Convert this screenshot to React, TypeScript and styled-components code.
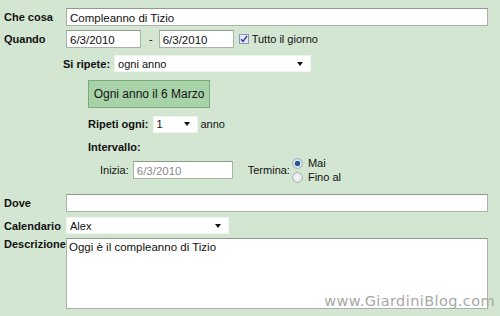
import React from 'react';
import styled, { createGlobalStyle } from 'styled-components';

const GlobalStyle = createGlobalStyle`
  html, body {
    margin: 0;
    padding: 0;
    background: #d3e6d2;
  }
  * {
    box-sizing: border-box;
  }
`;

const Page = styled.div`
  position: relative;
  width: 500px;
  height: 316px;
  overflow: hidden;
  padding: 8px 12px 0 4px;
  background: #d3e6d2;
  font-family: 'Liberation Sans', Arial, sans-serif;
  font-size: 11px;
  color: #111;
`;

const Row = styled.div<{ $top?: number; $indent?: number; $height?: number }>`
  display: flex;
  align-items: center;
  margin-top: ${({ $top }) => $top ?? 0}px;
  padding-left: ${({ $indent }) => $indent ?? 0}px;
  height: ${({ $height }) => $height ?? 18}px;
`;

const TopRow = styled(Row)`
  align-items: flex-start;
`;

const Label = styled.div`
  width: 62px;
  flex-shrink: 0;
  font-weight: bold;
  white-space: nowrap;
`;

const InlineLabel = styled.span<{ $bold?: boolean }>`
  font-weight: ${({ $bold }) => ($bold ? 'bold' : 'normal')};
  margin-right: 4px;
  white-space: nowrap;
`;

const TextInput = styled.input<{ $width?: number; $muted?: boolean }>`
  width: ${({ $width }) => ($width ? `${$width}px` : '100%')};
  flex: ${({ $width }) => ($width ? 'none' : '1')};
  height: 18px;
  margin: 0;
  padding: 1px 3px 0;
  border: 1px solid #a9b4a9;
  border-top-color: #8f998f;
  background: #fff;
  font-family: 'Liberation Sans', Arial, sans-serif;
  font-size: 11.5px;
  color: ${({ $muted }) => ($muted ? '#8a8a8a' : '#111')};
  outline: none;
`;

const TextArea = styled.textarea`
  flex: 1;
  height: 71px;
  margin: 0;
  padding: 2px 2px;
  border: 1px solid #a9b4a9;
  border-top-color: #8f998f;
  background: #fff;
  font-family: 'Liberation Sans', Arial, sans-serif;
  font-size: 11.5px;
  color: #111;
  resize: none;
  outline: none;
`;

const Dash = styled.span`
  margin: 0 6px 0 8px;
`;

const SelectBox = styled.div<{ $width: number }>`
  display: flex;
  align-items: center;
  justify-content: space-between;
  width: ${({ $width }) => $width}px;
  height: 17px;
  padding: 0 7px 0 3px;
  background: #fff;
  border: 1px solid #eef5ee;
`;

const Caret = styled.span`
  width: 0;
  height: 0;
  border-left: 3.5px solid transparent;
  border-right: 3.5px solid transparent;
  border-top: 4px solid #111;
`;

const CheckBox = styled.span`
  display: inline-flex;
  align-items: center;
  justify-content: center;
  width: 10px;
  height: 10px;
  margin: 0 3px 0 5px;
  border: 1px solid #8a94b8;
  background: #e6e9f4;
`;

const YearButton = styled.div`
  display: flex;
  align-items: center;
  justify-content: center;
  width: 122px;
  height: 28px;
  margin: 8px 0 0 84px;
  background: #a8d2a7;
  border: 1px solid #7aa97a;
  font-size: 12px;
  color: #151515;
`;

const SectionTitle = styled.div`
  margin: 9px 0 0 84px;
  height: 12px;
  line-height: 12px;
  font-weight: bold;
`;

const RangeRow = styled.div`
  display: flex;
  align-items: center;
  margin: 4px 0 0 96px;
  height: 26px;
`;

const EndGroup = styled.div`
  display: flex;
  align-items: center;
  margin-left: 15px;
`;

const RadioList = styled.div`
  display: flex;
  flex-direction: column;
  gap: 3px;
  margin-left: 2px;
`;

const RadioItem = styled.div`
  display: flex;
  align-items: center;
  gap: 5px;
  height: 11px;
`;

const Radio = styled.span<{ $checked?: boolean }>`
  display: inline-block;
  width: 11px;
  height: 11px;
  border-radius: 50%;
  border: 1px solid #a7b0b6;
  background: ${({ $checked }) =>
    $checked
      ? 'radial-gradient(circle, #2a5688 0 2.5px, #d3e2ef 3px)'
      : 'radial-gradient(circle, #f6f7f7 0, #dcdfe1 100%)'};
`;

const Watermark = styled.div`
  position: absolute;
  right: 5px;
  bottom: 7px;
  font-family: 'DejaVu Sans', sans-serif;
  font-size: 14.5px;
  letter-spacing: 0.4px;
  color: #a6a9a6;
`;

const CheckMark = () => (
  <svg width="8" height="8" viewBox="0 0 8 8">
    <path d="M1 4.2 L3 6.3 L7 1" fill="none" stroke="#2c3ea8" strokeWidth="1.4" />
  </svg>
);

const App: React.FC = () => {
  return (
    <>
      <GlobalStyle />
      <Page>
        <Row>
          <Label>Che cosa</Label>
          <TextInput readOnly value="Compleanno di Tizio" />
        </Row>

        <Row $top={4}>
          <Label>Quando</Label>
          <TextInput readOnly $width={75} value="6/3/2010" />
          <Dash>-</Dash>
          <TextInput readOnly $width={75} value="6/3/2010" />
          <CheckBox>
            <CheckMark />
          </CheckBox>
          <span>Tutto il giorno</span>
        </Row>

        <Row $top={7} $indent={59} $height={17}>
          <InlineLabel $bold>Si ripete:</InlineLabel>
          <SelectBox $width={197}>
            <span>ogni anno</span>
            <Caret />
          </SelectBox>
        </Row>

        <YearButton>Ogni anno il 6 Marzo</YearButton>

        <Row $top={8} $indent={84} $height={16}>
          <InlineLabel $bold>Ripeti ogni:</InlineLabel>
          <SelectBox $width={45}>
            <span>1</span>
            <Caret />
          </SelectBox>
          <InlineLabel style={{ marginLeft: 3 }}>anno</InlineLabel>
        </Row>

        <SectionTitle>Intervallo:</SectionTitle>

        <RangeRow>
          <InlineLabel>Inizia:</InlineLabel>
          <TextInput readOnly $muted $width={100} value="6/3/2010" />
          <EndGroup>
            <InlineLabel style={{ marginRight: 0 }}>Termina:</InlineLabel>
            <RadioList>
              <RadioItem>
                <Radio $checked />
                <span>Mai</span>
              </RadioItem>
              <RadioItem>
                <Radio />
                <span>Fino al</span>
              </RadioItem>
            </RadioList>
          </EndGroup>
        </RangeRow>

        <Row $top={11}>
          <Label>Dove</Label>
          <TextInput readOnly value="" />
        </Row>

        <Row $top={5} $height={17}>
          <Label>Calendario</Label>
          <SelectBox $width={163}>
            <span>Alex</span>
            <Caret />
          </SelectBox>
        </Row>

        <TopRow $top={4} $height={71}>
          <Label>Descrizione</Label>
          <TextArea readOnly value="Oggi è il compleanno di Tizio" />
        </TopRow>

        <Watermark>www.GiardiniBlog.com</Watermark>
      </Page>
    </>
  );
};

export default App;
